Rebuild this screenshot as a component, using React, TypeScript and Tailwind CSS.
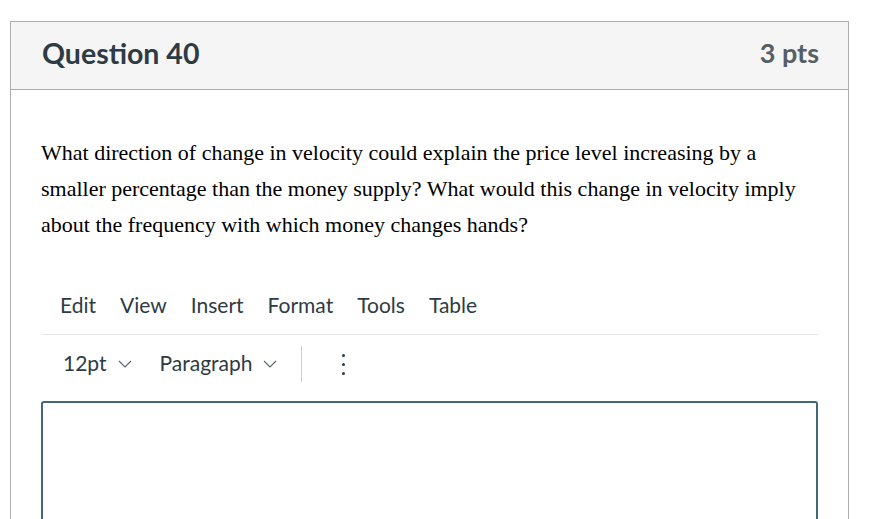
const lato = { fontFamily: "Lato, 'Noto Sans', sans-serif" };

function Chevron() {
  return (
    <svg width="14" height="8" viewBox="0 0 14 8" className="ml-[11px] mt-[3px]">
      <path d="M1 1l6 6 6-6" fill="none" stroke="#5b6770" strokeWidth="1.2" />
    </svg>
  );
}

export default function App() {
  const menu = ["Edit", "View", "Insert", "Format", "Tools", "Table"];

  return (
    <div className="min-h-[519px] w-[872px] overflow-hidden bg-white pl-[10px] pt-[21px]">
      <div className="w-[839px] border border-[#adadad]">
        <div
          className="flex h-[68px] items-center justify-between border-b border-[#adadad] bg-[#f5f5f5] pb-[4px] pl-[31px] pr-[29px]"
          style={lato}
        >
          <h2 className="text-[28.5px] font-bold text-[#2d3b45]">Question 40</h2>
          <span className="text-[27px] font-bold text-[#555f66]">3 pts</span>
        </div>

        <div className="px-[30px] pt-[45px]">
          <p
            className="text-[22px] leading-[36px] text-black"
            style={{ fontFamily: "'Liberation Serif', 'Times New Roman', serif" }}
          >
            What direction of change in velocity could explain the price level increasing by a smaller
            percentage than the money supply? What would this change in velocity imply about the
            frequency with which money changes hands?
          </p>

          <div
            className="mt-[50px] flex gap-[24px] border-b border-[#e4e6e8] pb-[17px] pl-[19px] text-[21px] leading-[24px] text-[#2d3b45]"
            style={lato}
          >
            {menu.map((m) => (
              <span key={m}>{m}</span>
            ))}
          </div>

          <div
            className="mt-[11px] flex h-[36px] items-center pb-[3px] pl-[22px] text-[21px] leading-[24px] text-[#2d3b45]"
            style={lato}
          >
            <span>12pt</span>
            <Chevron />
            <span className="ml-[28px]">Paragraph</span>
            <Chevron />
            <div className="ml-[24px] h-[36px] w-px self-start bg-[#c7cdd1]" />
            <div className="ml-[40px] mt-[3px] flex flex-col items-center gap-[6px]">
              <span className="h-[3px] w-[3px] rounded-full bg-[#2d3b45]" />
              <span className="h-[3px] w-[3px] rounded-full bg-[#2d3b45]" />
              <span className="h-[3px] w-[3px] rounded-full bg-[#2d3b45]" />
            </div>
          </div>

          <div className="mt-[19px] h-[200px] rounded-[3px] border-2 border-[#43677a]" />
        </div>
      </div>
    </div>
  );
}
